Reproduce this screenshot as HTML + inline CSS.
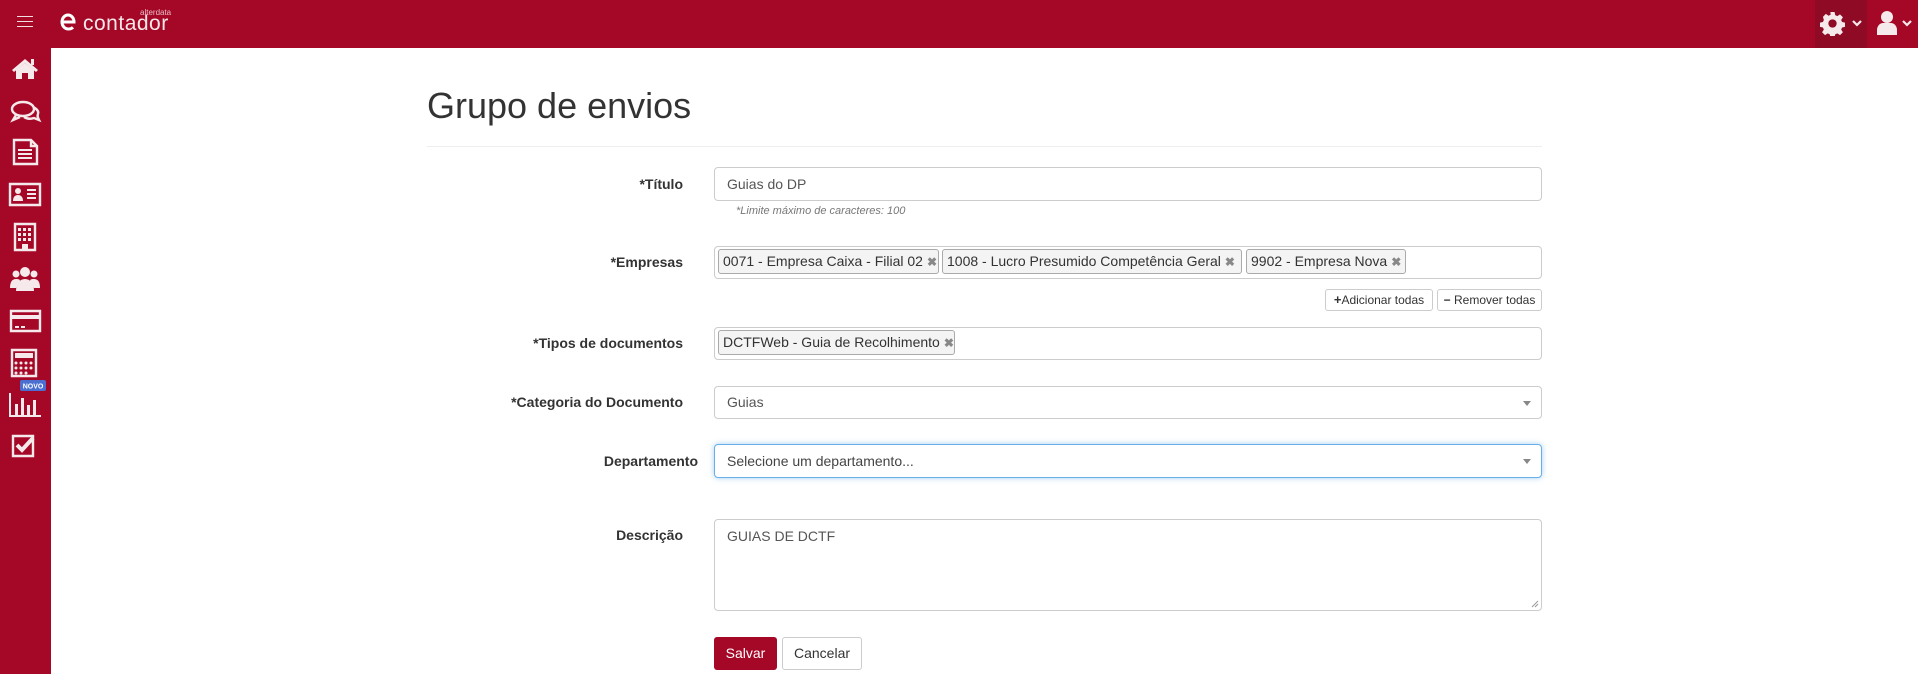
<!DOCTYPE html>
<html><head><meta charset="utf-8"><style>
*{box-sizing:border-box;margin:0;padding:0}
body{width:1918px;height:674px;overflow:hidden;background:#fff;font-family:"Liberation Sans",Arial,sans-serif;color:#333;position:relative}
.abs{position:absolute}
#hdr{left:0;top:0;width:1918px;height:48px;background:#a50727}
#side{left:0;top:48px;width:51px;height:626px;background:#a50727}
.lbl{position:absolute;font-weight:bold;font-size:14px;color:#333;text-align:right;white-space:nowrap}
.inp{position:absolute;left:714px;width:828px;border:1px solid #ccc;border-radius:4px;background:#fff;font-size:14px;color:#555}
.tag{position:absolute;height:25px;border:1px solid #aaa;border-radius:3px;background:#f4f4f4;font-size:14px;color:#333;line-height:23px;padding-left:4px;white-space:nowrap}
.tag b{color:#888;font-size:12px;margin-left:4px}
.arr{position:absolute;right:10px;top:14px;width:0;height:0;border-left:4px solid transparent;border-right:4px solid transparent;border-top:5px solid #888}
.btn{position:absolute;border:1px solid #ccc;border-radius:3px;background:#fff;font-size:12px;color:#333;text-align:center}
</style></head><body>
<div id="hdr" class="abs">
  <div class="abs" style="left:17px;top:16px;width:16px;height:1px;background:#f2dde0"></div>
  <div class="abs" style="left:17px;top:21px;width:16px;height:1px;background:#f2dde0"></div>
  <div class="abs" style="left:17px;top:26px;width:16px;height:1px;background:#f2dde0"></div>
  <svg class="abs" style="left:58px;top:12px" width="20" height="20" viewBox="0 0 20 20"><path d="M4 10h12c0-4-2.7-7-6-7s-6 3-6 7 2.7 7 6.5 7c2 0 3.5-.7 4.5-1.7" fill="none" stroke="#fff" stroke-width="3"/></svg>
  <div class="abs" style="left:83px;top:12px;font-size:21px;color:#f5e8ea;letter-spacing:0.5px;line-height:24px">contador</div>
  <div class="abs" style="left:140px;top:8px;font-size:8px;color:#e8bfc6">alterdata</div>
  <div class="abs" style="left:1815px;top:0;width:52px;height:48px;background:#8f0a24"></div>
  <svg class="abs" style="left:1820px;top:11px" width="25" height="25" viewBox="0 0 24 24"><path fill="#f6e9eb" d="M10 1h4l.6 3 2 .9 2.6-1.7 2.8 2.8-1.7 2.6.9 2 3 .6v4l-3 .6-.9 2 1.7 2.6-2.8 2.8-2.6-1.7-2 .9-.6 3h-4l-.6-3-2-.9-2.6 1.7-2.8-2.8 1.7-2.6-.9-2-3-.6v-4l3-.6.9-2L2.8 5.6l2.8-2.8 2.6 1.7 2-.9z"/><circle cx="12" cy="12" r="4" fill="#8f0a24"/></svg>
  <svg class="abs" style="left:1852px;top:19px" width="10" height="8" viewBox="0 0 10 8"><path d="M1 2l4 4 4-4" stroke="#f6e9eb" stroke-width="2.2" fill="none"/></svg>
  <svg class="abs" style="left:1877px;top:10px" width="20" height="25" viewBox="0 0 20 25"><circle cx="10" cy="7" r="6" fill="#f6e9eb"/><path d="M0 25v-5c0-4 3-7 6-7h8c3 0 6 3 6 7v5z" fill="#f6e9eb"/></svg>
  <svg class="abs" style="left:1902px;top:19px" width="10" height="8" viewBox="0 0 10 8"><path d="M1 2l4 4 4-4" stroke="#f6e9eb" stroke-width="2.2" fill="none"/></svg>
</div>
<div id="side" class="abs"></div>
<svg class="abs" style="left:0;top:48px" width="51" height="420" viewBox="0 48 51 420">
 <g fill="#f6e9eb" stroke="none">
  <path d="M12 70l13-11 13 11-2 2-11-9-11 9z"/><path d="M16 70l9-7 9 7v9h-6v-6h-6v6h-6z"/><rect x="31" y="59" width="3" height="6"/>
 </g>
 <g fill="none" stroke="#f6e9eb" stroke-width="2.4">
  <ellipse cx="23" cy="109" rx="11" ry="7"/><path d="M16 115l-3 5 7-3"/><path d="M33 107c4 2 6 4 5 7-1 2 0 4 1 6l-5-2c-3 1-7 1-10-1"/>
  <path d="M14 140v24h23v-18l-6-6z"/><path d="M31 140v6h6"/>
  <path d="M10 184h30v21h-30z"/>
  <path d="M15 224h20v26h-20z"/>
  <path d="M11 311h29v20h-29z"/>
  <path d="M12 350h24v26h-24z"/>
  <path d="M13 436h20v20h-20z"/>
 </g>
 <g fill="#f6e9eb">
  <path d="M18 149h14v2h-14zM18 153h14v2h-14zM18 157h14v2h-14z"/>
  <circle cx="18" cy="191" r="3"/><path d="M13 201c0-4 2-6 5-6s5 2 5 6z"/><path d="M27 189h9v2h-9zM27 193h9v2h-9zM27 197h9v2h-9z"/>
  <path d="M18 228h3v3h-3zM23 228h3v3h-3zM28 228h3v3h-3zM18 233h3v3h-3zM23 233h3v3h-3zM28 233h3v3h-3zM18 238h3v3h-3zM23 238h3v3h-3zM28 238h3v3h-3zM22 244h6v6h-6z"/>
  <circle cx="25" cy="272" r="5"/><circle cx="16" cy="274" r="3.5"/><circle cx="34" cy="274" r="3.5"/>
  <path d="M16 291c0-8 4-12 9-12s9 4 9 12z"/><path d="M10 288c0-6 2-9 6-9s4 1 4 3l-4 6z"/><path d="M40 288c0-6-2-9-6-9s-4 1-4 3l4 6z"/>
  <path d="M11 315h29v4h-29z"/><path d="M15 326h4v2h-4zM21 326h4v2h-4z"/>
  <path d="M15 353h18v5h-18z"/>
  <circle cx="16" cy="363" r="1.5"/><circle cx="21" cy="363" r="1.5"/><circle cx="26" cy="363" r="1.5"/><circle cx="31" cy="363" r="1.5"/>
  <circle cx="16" cy="368" r="1.5"/><circle cx="21" cy="368" r="1.5"/><circle cx="26" cy="368" r="1.5"/><circle cx="31" cy="368" r="1.5"/>
  <circle cx="16" cy="373" r="1.5"/><circle cx="21" cy="373" r="1.5"/><circle cx="26" cy="373" r="1.5"/>
  <path d="M9 393h2v22h30v2h-32z"/><path d="M15 404h3v11h-3zM21 398h3v17h-3zM27 405h3v10h-3zM33 400h3v15h-3z"/>
 </g>
 <path d="M17 445l5 5 11-12" fill="none" stroke="#f6e9eb" stroke-width="4"/>
 <rect x="20" y="380" width="26" height="11" rx="2" fill="#4a6fd0"/>
 <text x="33" y="388.5" font-size="7" font-weight="bold" fill="#fff" text-anchor="middle" font-family="Liberation Sans,sans-serif">NOVO</text>
</svg>

<div class="abs" style="left:427px;top:84px;font-size:36px;color:#333;line-height:44px">Grupo de envios</div>
<div class="abs" style="left:427px;top:146px;width:1115px;height:1px;background:#eee"></div>

<div class="lbl" style="right:1235px;top:176px">*Título</div>
<div class="inp" style="top:167px;height:34px;padding:8px 12px">Guias do DP</div>
<div class="abs" style="left:736px;top:205px;font-size:11px;font-style:italic;color:#777">*Limite máximo de caracteres: 100</div>

<div class="lbl" style="right:1235px;top:254px">*Empresas</div>
<div class="inp" style="top:246px;height:33px"></div>
<div class="tag" style="left:718px;top:249px;width:221px">0071 - Empresa Caixa - Filial 02<b>✖</b></div>
<div class="tag" style="left:942px;top:249px;width:300px">1008 - Lucro Presumido Competência Geral<b>✖</b></div>
<div class="tag" style="left:1246px;top:249px;width:160px">9902 - Empresa Nova<b>✖</b></div>
<div class="btn" style="left:1325px;top:289px;width:108px;height:22px;line-height:20px"><b style="font-size:13px">+</b>Adicionar todas</div>
<div class="btn" style="left:1437px;top:289px;width:105px;height:22px;line-height:20px"><b>−</b> Remover todas</div>

<div class="lbl" style="right:1235px;top:335px">*Tipos de documentos</div>
<div class="inp" style="top:327px;height:33px"></div>
<div class="tag" style="left:718px;top:330px;width:237px">DCTFWeb - Guia de Recolhimento<b>✖</b></div>

<div class="lbl" style="right:1235px;top:394px">*Categoria do Documento</div>
<div class="inp" style="top:386px;height:33px;padding:7px 12px">Guias<div class="arr"></div></div>

<div class="lbl" style="right:1220px;top:453px">Departamento</div>
<div class="inp" style="top:444px;height:34px;padding:8px 12px;border-color:#66afe9;box-shadow:0 0 6px rgba(102,175,233,.6);color:#444">Selecione um departamento...<div class="arr"></div></div>

<div class="lbl" style="right:1235px;top:527px">Descrição</div>
<div class="inp" style="top:519px;height:92px;padding:8px 12px">GUIAS DE DCTF
<svg class="abs" style="right:2px;bottom:2px" width="8" height="8" viewBox="0 0 8 8"><path d="M7 1L1 7M7 4L4 7" stroke="#999" stroke-width="1"/></svg></div>

<div class="abs" style="left:714px;top:637px;width:63px;height:33px;background:#a50727;border-radius:3px;color:#fff;font-size:14px;line-height:33px;text-align:center">Salvar</div>
<div class="abs" style="left:782px;top:637px;width:80px;height:33px;border:1px solid #ccc;border-radius:3px;color:#333;font-size:14px;line-height:31px;text-align:center">Cancelar</div>
</body></html>
